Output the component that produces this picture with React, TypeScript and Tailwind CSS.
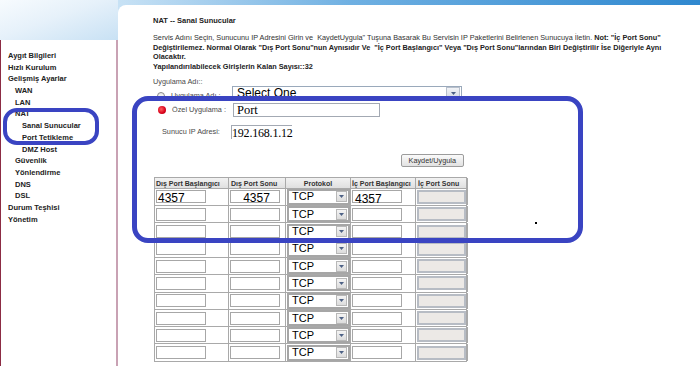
import React from "react";

const menu: [string, number][] = [
  ["Aygıt Bilgileri", 0],
  ["Hızlı Kurulum", 0],
  ["Gelişmiş Ayarlar", 0],
  ["WAN", 1],
  ["LAN", 1],
  ["NAT", 1],
  ["Sanal Sunucular", 2],
  ["Port Tetikleme", 2],
  ["DMZ Host", 2],
  ["Güvenlik", 1],
  ["Yönlendirme", 1],
  ["DNS", 1],
  ["DSL", 1],
  ["Durum Teşhisi", 0],
  ["Yönetim", 0],
];

function Arrow() {
  return (
    <div className="w-[11px] h-[11px] bg-[linear-gradient(#f4f4f4,#dcdcdc)] border border-[#b8b8b8] flex items-center justify-center">
      <svg width="5" height="3" viewBox="0 0 5 3">
        <path d="M0 0 L5 0 L2.5 3 Z" fill="#4d6185" />
      </svg>
    </div>
  );
}

function Row({ first }: { first?: boolean }) {
  return (
    <div className="grid grid-cols-[74px_57px_65px_65px_52px] h-[17.3px] border-b border-[#a9a9a9]">
      <div className="border-r border-[#a9a9a9] flex items-center pl-[1px]">
        <div className="w-[50px] h-[13px] border border-[#a7a7a7] bg-white text-[12px] leading-[13px] font-['Liberation_Sans',Arial,sans-serif] text-black pl-[1px] pt-[1px]">
          {first ? "4357" : ""}
        </div>
      </div>
      <div className="border-r border-[#a9a9a9] flex items-center pl-[1px]">
        <div className="w-[50px] h-[13px] border border-[#a7a7a7] bg-white text-[12px] leading-[13px] font-['Liberation_Sans',Arial,sans-serif] text-black text-center pl-[3px] pt-[1px]">
          {first ? "4357" : ""}
        </div>
      </div>
      <div className="border-r border-[#a9a9a9] flex items-center pl-[1px]">
        <div className="w-[63px] h-[16px] border-2 border-[#a6a6a6] bg-white flex items-center justify-between pl-[3px] pr-[1px]">
          <span className="text-[11px] leading-[11px] font-['Liberation_Sans',Arial,sans-serif] text-black">TCP</span>
          <Arrow />
        </div>
      </div>
      <div className="border-r border-[#a9a9a9] flex items-center pl-[1px]">
        <div className="w-[50px] h-[13px] border border-[#a7a7a7] bg-white text-[12px] leading-[13px] font-['Liberation_Sans',Arial,sans-serif] text-black pl-[2px] pt-[2px]">
          {first ? "4357" : ""}
        </div>
      </div>
      <div className="border-r-2 border-[#a9a9a9] flex items-center pl-[1px]">
        <div className="w-[49px] h-[14px] border-2 border-[#b7bcc4] bg-[#ece9e6]" />
      </div>
    </div>
  );
}

export default function App() {
  return (
    <div className="relative w-[700px] h-[366px] overflow-hidden bg-white flex font-['Liberation_Sans',Arial,sans-serif] text-[#2a2a2a]">
      {/* left column */}
      <div className="w-[118px] shrink-0 flex flex-col">
        <div className="h-[40px] bg-[linear-gradient(160deg,#f7fbfe_0%,#e6f1fa_45%,#c8e1f4_100%)]" />
        <div className="flex-1 bg-white border-l border-[#8c2c44] border-r-2 border-r-[#c9a2b4] pt-[10px] pl-[7px]">
          {menu.map(([t, l]) => (
            <div
              key={t}
              className={`h-[11.7px] leading-[11.7px] text-[7.5px] font-bold text-[#222] ${
                l === 0 ? "pl-0" : l === 1 ? "pl-[7px]" : "pl-[14px]"
              }`}
            >
              {t}
            </div>
          ))}
        </div>
      </div>

      {/* right column */}
      <div className="flex-1 flex flex-col bg-[linear-gradient(90deg,#c8e2f5,#6fb0e2_40%,#2f88cf)]">
        <div className="mt-[5px] flex-1 bg-white rounded-tl-[8px] pl-[35px] pt-[11px]">
          <div className="text-[7.5px] leading-[10px] font-bold text-[#222]">NAT -- Sanal Sunucular</div>
          <div className="mt-[7px] w-[540px] text-[7.3px] leading-[9.7px] text-[#333]">
            Servis Adını Seçin, Sunucunu IP Adresini Girin ve&nbsp; KaydetUygula" Tuşuna Basarak Bu Servisin IP Paketlerini Belirlenen Sunucuya İletin.{" "}
            <b className="text-[#222]">
              Not: "İç Port Sonu" Değiştirilemez. Normal Olarak "Dış Port Sonu"nun Aynısıdır Ve &nbsp;"İç Port Başlangıcı" Veya "Dış Port Sonu"larından Biri Değiştirilir İse Diğeriyle Aynı Olacaktır.
            </b>
            <br />
            <b className="text-[#222]">Yapılandırılabilecek Girişlerin Kalan Sayısı::32</b>
          </div>

          <div className="mt-[5px] h-[10px] text-[7.3px] leading-[10px] text-[#4a4a4a]">Uygulama Adı::</div>

          <div className="mt-[-1px] flex items-center h-[15px]">
            <div className="mt-[6px] ml-[4px] w-[8px] h-[8px] rounded-full border border-[#8a8a8a] bg-[linear-gradient(#e8e8e8,#fff)]" />
            <div className="mt-[6px] ml-[6px] w-[63px] text-[7.3px] text-[#4a4a4a]">Uygulama Adı :</div>
            <div className="ml-[-2px] w-[230px] h-[15px] border border-[#9aa9bb] bg-white flex items-center justify-between pl-[4px] pr-[1px]">
              <span className="text-[12px] leading-[12px] text-black">Select One</span>
              <div className="w-[14px] h-[12px] bg-[linear-gradient(#f2f4f7,#d6dbe3)] border border-[#b8c0cc] flex items-center justify-center">
                <svg width="5" height="3" viewBox="0 0 5 3">
                  <path d="M0 0 L5 0 L2.5 3 Z" fill="#4d6185" />
                </svg>
              </div>
            </div>
          </div>

          <div className="mt-[2px] flex items-center h-[15px]">
            <div className="ml-[5px] w-[8px] h-[8px] rounded-full bg-[radial-gradient(circle_at_40%_40%,#ff6060,#d8001a_60%,#a00010)]" />
            <div className="ml-[6px] w-[61px] text-[7.3px] text-[#4a4a4a]">Özel Uygulama :</div>
            <div className="w-[147px] h-[14px] border border-[#a3a9b3] bg-white pl-[3px] font-['Liberation_Serif','Times_New_Roman',serif] text-[12.5px] leading-[13px] text-black">
              Port
            </div>
          </div>

          <div className="mt-[7px] flex items-center h-[15px]">
            <div className="ml-[9px] w-[69px] text-[7.3px] text-[#4a4a4a]">Sunucu IP Adresi:</div>
            <div className="w-[61px] h-[14px] border-l border-t border-[#a3a9b3] bg-white font-['Liberation_Serif','Times_New_Roman',serif] text-[12px] leading-[14px] text-black whitespace-nowrap tracking-[-0.2px]">
              192.168.1.12
            </div>
          </div>

          <div className="mt-[14px] w-[311px] flex justify-end">
            <div className="h-[13px] px-[7px] border border-[#9c9c9c] rounded-[2px] bg-[linear-gradient(#fafafa,#e2e2e2)] text-[7.3px] leading-[11px] text-[#333]">
              Kaydet/Uygula
            </div>
          </div>

          <div className="mt-[10px] ml-[1px] w-[313px] border-l border-[#a9a9a9]">
            <div className="grid grid-cols-[74px_57px_65px_65px_52px] h-[12px] border-t border-b border-[#a9a9a9] bg-[linear-gradient(#f2f2f2,#e0e0e0)] text-[7px] leading-[11px] font-bold text-[#333]">
              <div className="border-r border-[#a9a9a9] pl-[1px] whitespace-nowrap overflow-hidden">Dış Port Başlangıcı</div>
              <div className="border-r border-[#a9a9a9] pl-[2px] whitespace-nowrap overflow-hidden">Dış Port Sonu</div>
              <div className="border-r border-[#a9a9a9] text-center whitespace-nowrap">Protokol</div>
              <div className="border-r border-[#a9a9a9] pl-[1px] whitespace-nowrap overflow-hidden">İç Port Başlangıcı</div>
              <div className="border-r-2 border-[#a9a9a9] pl-[2px] whitespace-nowrap overflow-hidden">İç Port Sonu</div>
            </div>
            {Array.from({ length: 10 }).map((_, i) => (
              <Row key={i} first={i === 0} />
            ))}
          </div>
        </div>
      </div>

      {/* annotation overlays */}
      <div className="absolute left-[132px] top-[96px] w-[451px] h-[147px] border-[5px] border-[#3a44c2] rounded-[16px] pointer-events-none" />
      <div className="absolute left-[3px] top-[108px] w-[96px] h-[37px] border-[4px] border-[#3a44c2] rounded-[14px] pointer-events-none" />
      <div className="absolute left-[535px] top-[222px] w-[2px] h-[2px] bg-black" />
    </div>
  );
}
